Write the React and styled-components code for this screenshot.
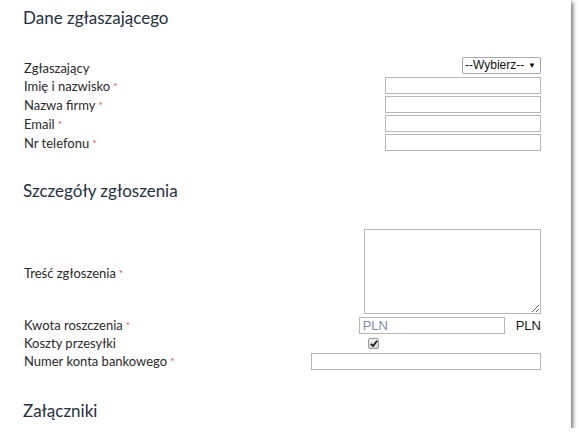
import React from "react";
import styled, { createGlobalStyle } from "styled-components";

const Global = createGlobalStyle`
  html, body {
    margin: 0;
    padding: 0;
    background: #ffffff;
  }
  body {
    font-family: Lato, "Open Sans", sans-serif;
  }
`;

const Card = styled.div`
  width: 571px;
  height: 428px;
  box-sizing: border-box;
  background: #ffffff;
  box-shadow: 2px 2px 4px rgba(0, 0, 0, 0.55);
  padding: 6px 30px 0 24px;
  overflow: hidden;
`;

const Heading = styled.h2`
  margin: ${(p) => p.$top || 0}px 0 0 -1px;
  font-family: Lato, sans-serif;
  font-weight: 400;
  font-size: 17px;
  line-height: 24px;
  color: #24313e;
`;

const Rows = styled.div`
  display: flex;
  flex-direction: column;
  margin-top: ${(p) => p.$top || 0}px;
`;

const Row = styled.div`
  display: flex;
  align-items: center;
  justify-content: space-between;
  height: ${(p) => p.$h || 19}px;
`;

const Label = styled.span`
  font-size: 13px;
  color: #2a2a2a;
  margin-top: ${(p) => p.$shift || 0}px;
`;

const Req = styled.span`
  color: #e0474c;
  font-size: 10px;
  vertical-align: 1px;
  margin-left: 3px;
`;

const Field = styled.div`
  display: flex;
  align-items: center;
`;

const Input = styled.input`
  box-sizing: border-box;
  width: ${(p) => p.$w}px;
  height: 17px;
  margin: 0;
  padding: 0 3px;
  border: 1px solid #b7b7b7;
  border-radius: 0;
  font-family: "Liberation Sans", Arial, sans-serif;
  font-size: 13px;
  outline: none;
  &::placeholder {
    color: #7d8fa8;
  }
`;

const Area = styled.textarea`
  box-sizing: border-box;
  width: 177px;
  height: 85px;
  margin: 0;
  border: 1px solid #b7b7b7;
  outline: none;
  display: block;
`;

const Select = styled.div`
  box-sizing: border-box;
  width: 79px;
  height: 17px;
  border: 1px solid #a8a8a8;
  border-radius: 2px;
  display: flex;
  align-items: center;
  justify-content: space-between;
  padding: 0 4px 0 2px;
  font-family: "Liberation Sans", Arial, sans-serif;
  font-size: 12px;
  color: #111;
  margin-top: -3px;
`;

const Arrow = styled.span`
  font-size: 8px;
  color: #111;
`;

const Suffix = styled.span`
  font-family: "Liberation Sans", Arial, sans-serif;
  font-size: 13px;
  color: #1a1a1a;
  margin-left: 11px;
`;

const CheckSlot = styled.div`
  width: 230px;
  display: flex;
  padding-left: 57px;
  box-sizing: border-box;
`;

const Check = styled.span`
  width: 11px;
  height: 11px;
  box-sizing: border-box;
  border: 1px solid #9a9a9a;
  border-radius: 2px;
  background: linear-gradient(#f2f2f2, #d2d2d2);
  display: flex;
  align-items: center;
  justify-content: center;
`;

const Req_ = () => <Req>*</Req>;

export default function App() {
  return (
    <>
      <Global />
      <Card>
        <Heading>Dane zgłaszającego</Heading>
        <Rows $top={27}>
          <Row>
            <Label $shift={2}>Zgłaszający</Label>
            <Select>
              <span>--Wybierz--</span>
              <Arrow>▼</Arrow>
            </Select>
          </Row>
          <Row>
            <Label>
              Imię i nazwisko
              <Req_ />
            </Label>
            <Input $w={156} />
          </Row>
          <Row>
            <Label>
              Nazwa firmy
              <Req_ />
            </Label>
            <Input $w={156} />
          </Row>
          <Row>
            <Label>
              Email
              <Req_ />
            </Label>
            <Input $w={156} />
          </Row>
          <Row>
            <Label>
              Nr telefonu
              <Req_ />
            </Label>
            <Input $w={156} />
          </Row>
        </Rows>

        <Heading $top={27}>Szczegóły zgłoszenia</Heading>
        <Rows $top={25}>
          <Row $h={87}>
            <Label $shift={2}>
              Treść zgłoszenia
              <Req_ />
            </Label>
            <Area />
          </Row>
          <Row $h={20}>
            <Label>
              Kwota roszczenia
              <Req_ />
            </Label>
            <Field>
              <Input $w={146} placeholder="PLN" />
              <Suffix>PLN</Suffix>
            </Field>
          </Row>
          <Row $h={16}>
            <Label>Koszty przesyłki</Label>
            <CheckSlot>
              <Check>
                <svg width="8" height="7" viewBox="0 0 8 7">
                  <path d="M0.8 3.8 L3 6 L7.2 0.8" fill="none" stroke="#1a1a1a" strokeWidth="1.8" />
                </svg>
              </Check>
            </CheckSlot>
          </Row>
          <Row $h={20}>
            <Label>
              Numer konta bankowego
              <Req_ />
            </Label>
            <Input $w={230} />
          </Row>
        </Rows>

        <Heading $top={28}>Załączniki</Heading>
      </Card>
    </>
  );
}
